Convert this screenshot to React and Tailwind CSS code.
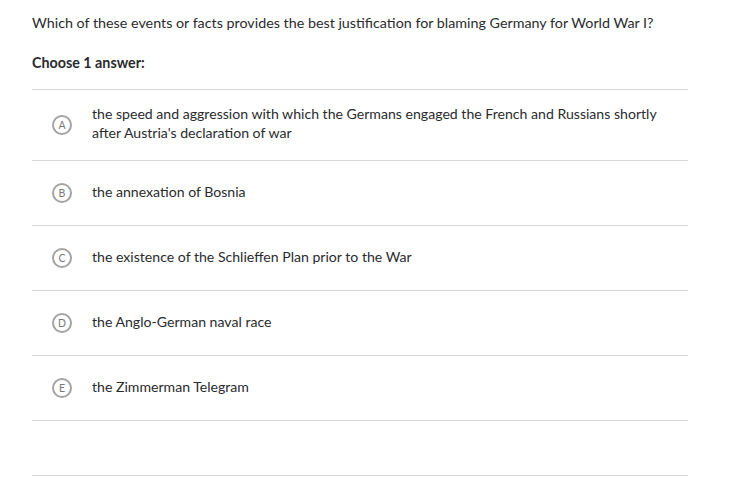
const choices = [
  {
    letter: "A",
    text: "the speed and aggression with which the Germans engaged the French and Russians shortly after Austria's declaration of war",
    tall: true,
  },
  { letter: "B", text: "the annexation of Bosnia" },
  { letter: "C", text: "the existence of the Schlieffen Plan prior to the War" },
  { letter: "D", text: "the Anglo-German naval race" },
  { letter: "E", text: "the Zimmerman Telegram" },
];

const App = () => {
  return (
    <div
      className="w-[730px] h-[494px] bg-white text-[#2a2b2e] text-[14.3px] overflow-hidden"
      style={{ fontFamily: "Lato, 'Noto Sans', sans-serif" }}
    >
      <div className="pl-[32px] w-[688px]">
        <p className="pt-[13px] leading-[20px]">
          Which of these events or facts provides the best justification for blaming Germany for World War I?
        </p>
        <p className="mt-[20px] leading-[20px] font-bold">Choose 1 answer:</p>

        <ul className="mt-[16px] border-t border-[#d6d6d6]">
          {choices.map((c) => (
            <li
              key={c.letter}
              className={`flex items-center border-b border-[#d6d6d6] ${
                c.tall ? "h-[71px]" : "h-[65px]"
              }`}
            >
              <div className="w-[60px] flex justify-center shrink-0">
                <span className="w-[20px] h-[20px] rounded-full border-2 border-[#a3a3a3] flex items-center justify-center text-[10.5px] text-[#7a7a7a] leading-none">
                  {c.letter}
                </span>
              </div>
              <span className="text-[14.1px] leading-[19px] pr-[20px] pb-[4px]">{c.text}</span>
            </li>
          ))}
          <li className="h-[55px] border-b border-[#d6d6d6]" />
        </ul>
      </div>
    </div>
  );
};

export default App;
